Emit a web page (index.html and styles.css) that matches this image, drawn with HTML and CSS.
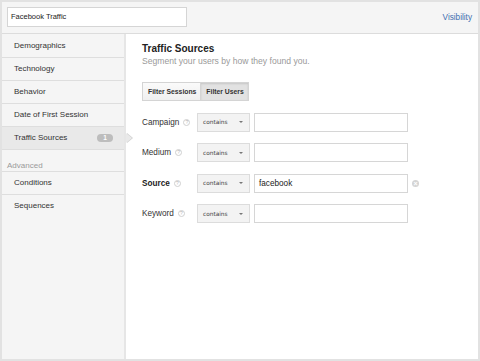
FILE: index.html
```html
<!DOCTYPE html>
<html>
<head>
<meta charset="utf-8">
<link rel="stylesheet" href="styles.css">
</head>
<body>
<div class="frame">
  <div class="header">
    <div class="name-input">Facebook Traffic</div>
    <a class="visibility">Visibility</a>
  </div>
  <div class="body">
    <div class="sidebar">
      <div class="item">Demographics</div>
      <div class="item">Technology</div>
      <div class="item">Behavior</div>
      <div class="item">Date of First Session</div>
      <div class="item selected">Traffic Sources <span class="badge">1</span></div>
      <div class="section">Advanced</div>
      <div class="item">Conditions</div>
      <div class="item last">Sequences</div>
    </div>
    <div class="main">
      <div class="title">Traffic Sources</div>
      <div class="subtitle">Segment your users by how they found you.</div>
      <div class="toggle">
        <span class="tbtn">Filter Sessions</span><span class="tbtn active">Filter Users</span>
      </div>
      <div class="rows">
        <div class="row">
          <div class="label">Campaign <span class="help">?</span></div>
          <div class="select">contains <span class="caret"></span></div>
          <div class="field"></div>
        </div>
        <div class="row">
          <div class="label">Medium <span class="help">?</span></div>
          <div class="select">contains <span class="caret"></span></div>
          <div class="field"></div>
        </div>
        <div class="row">
          <div class="label strong">Source <span class="help">?</span></div>
          <div class="select">contains <span class="caret"></span></div>
          <div class="field">facebook</div>
          <span class="clear">×</span>
        </div>
        <div class="row">
          <div class="label">Keyword <span class="help">?</span></div>
          <div class="select">contains <span class="caret"></span></div>
          <div class="field"></div>
        </div>
      </div>
    </div>
  </div>
</div>
</body>
</html>
```
FILE: styles.css
```css
html, body {
  margin: 0;
  padding: 0;
  background: #fff;
}
body {
  font-family: "Liberation Sans", Arial, sans-serif;
  color: #333;
}
.frame {
  width: 480px;
  height: 361px;
  box-sizing: border-box;
  border: 2px solid #e2e2e2;
  display: flex;
  flex-direction: column;
}
.header {
  height: 32px;
  background: #f5f5f5;
  border-bottom: 1px solid #dcdcdc;
  display: flex;
  align-items: flex-start;
  justify-content: space-between;
  padding: 5px 6px 0 5px;
  box-sizing: border-box;
  flex: none;
}
.name-input {
  width: 180px;
  height: 20px;
  box-sizing: border-box;
  background: #fff;
  border: 1px solid #d5d5d5;
  font-size: 7.5px;
  line-height: 18px;
  padding-left: 3px;
  color: #222;
}
.visibility {
  font-size: 8.2px;
  color: #3e6eb0;
  margin-top: 6px;
}
.body {
  flex: 1;
  display: flex;
}
.sidebar {
  width: 122px;
  background: #f5f5f5;
  border-right: 2px solid #e6e6e6;
  flex: none;
  padding-top: 1px;
}
.item {
  position: relative;
  height: 22px;
  border-bottom: 1px solid #dedede;
  font-size: 8px;
  line-height: 22px;
  padding: 0 11px 0 12px;
  display: flex;
  justify-content: space-between;
  align-items: center;
}
.item.last {
  border-bottom: none;
}
.item.selected {
  background: #e9e9e9;
}
.item.selected::after {
  content: "";
  position: absolute;
  right: -8px;
  top: 6px;
  width: 0;
  height: 0;
  border-top: 5px solid transparent;
  border-bottom: 5px solid transparent;
  border-left: 6px solid #e9e9e9;
  filter: drop-shadow(1px 0 0 #cfcfcf);
}
.badge {
  width: 16px;
  height: 8px;
  border-radius: 4px;
  background: #bdbdbd;
  color: #fff;
  font-size: 6.5px;
  font-weight: bold;
  line-height: 8px;
  text-align: center;
}
.section {
  height: 22px;
  border-bottom: 1px solid #dedede;
  font-size: 8px;
  color: #9a9a9a;
  padding-left: 5px;
  line-height: 10px;
  box-sizing: border-box;
  padding-top: 11px;
}
.main {
  flex: 1;
  padding: 9px 0 0 16px;
}
.title {
  font-size: 10px;
  font-weight: bold;
  line-height: 12px;
  color: #222;
}
.subtitle {
  margin-top: 1px;
  font-size: 8.6px;
  line-height: 11px;
  color: #9a9a9a;
}
.toggle {
  margin-top: 15px;
  display: flex;
}
.tbtn {
  height: 19px;
  box-sizing: border-box;
  border: 1px solid #d4d4d4;
  background: linear-gradient(#fafafa, #f0f0f0);
  font-size: 6.8px;
  font-weight: bold;
  line-height: 17px;
  padding: 0 4px 0 5px;
  color: #333;
}
.tbtn.active {
  background: #e2e2e2;
  border-left: none;
  box-shadow: inset 0 1px 2px rgba(0,0,0,0.12);
}
.rows {
  margin-top: 12px;
  display: flex;
  flex-direction: column;
  gap: 12px;
}
.row {
  display: flex;
  align-items: center;
  height: 18.5px;
}
.label {
  width: 55px;
  font-size: 8.2px;
  display: flex;
  align-items: center;
  gap: 4px;
}
.label.strong {
  font-weight: bold;
  color: #222;
}
.help {
  width: 7px;
  height: 7px;
  box-sizing: border-box;
  border: 1px solid #d0d0d0;
  border-radius: 50%;
  font-size: 5px;
  line-height: 5px;
  text-align: center;
  color: #b5b5b5;
  font-weight: normal;
}
.select {
  width: 53px;
  height: 19px;
  box-sizing: border-box;
  border: 1px solid #dcdcdc;
  background: #f3f3f3;
  font-family: "DejaVu Sans", Verdana, sans-serif;
  font-size: 5.8px;
  color: #444;
  display: flex;
  align-items: center;
  justify-content: space-between;
  padding: 0 6px 0 5px;
}
.caret {
  width: 0;
  height: 0;
  border-left: 2px solid transparent;
  border-right: 2px solid transparent;
  border-top: 2px solid #777;
}
.field {
  margin-left: 4px;
  width: 154px;
  height: 19px;
  box-sizing: border-box;
  border: 1px solid #d6d6d6;
  background: #fff;
  font-size: 8.2px;
  line-height: 17px;
  padding-left: 4px;
  color: #222;
}
.clear {
  margin-left: 4px;
  width: 7px;
  height: 7px;
  border-radius: 50%;
  background: #d4d4d4;
  color: #fff;
  font-size: 7px;
  line-height: 7px;
  text-align: center;
  font-weight: bold;
}
```
